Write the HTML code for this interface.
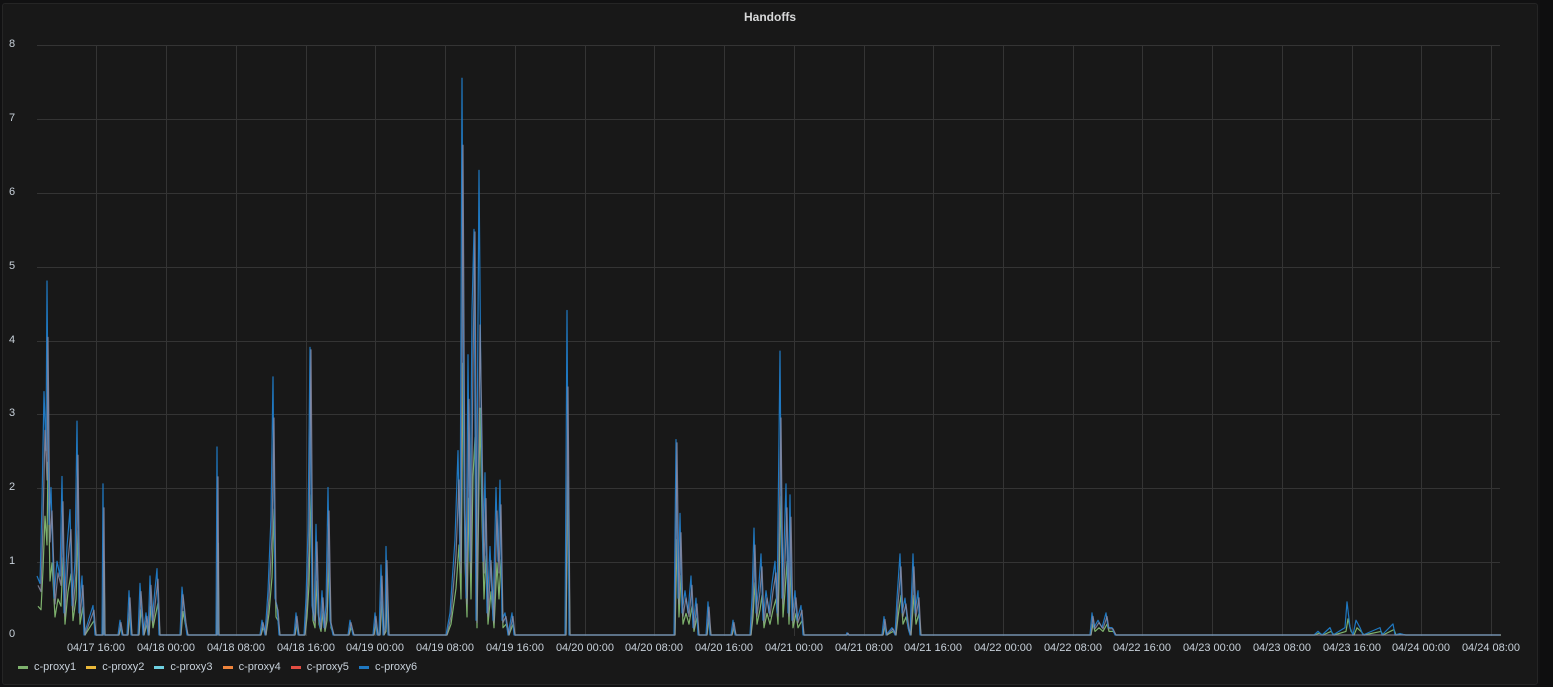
<!DOCTYPE html>
<html><head><meta charset="utf-8"><style>
html,body{margin:0;padding:0;background:#111112;width:1553px;height:687px;overflow:hidden;font-family:"Liberation Sans",sans-serif;}
.panel{position:absolute;left:2px;top:3px;width:1534px;height:680px;background:#181818;border:1px solid #252525;border-radius:3px;}
.strip{position:absolute;left:1540px;top:0;width:13px;height:687px;background:#0e0e0f;}
.title{position:absolute;left:0;width:1540px;top:10px;text-align:center;color:#d8d9da;font-size:12px;font-weight:bold;}
.yl{position:absolute;left:9px;color:#c7d0d9;font-size:11px;}
.xl{position:absolute;top:642px;color:#c7d0d9;font-size:11px;width:80px;margin-left:-40px;text-align:center;}
.leg{position:absolute;top:661px;left:18px;color:#c7d0d9;font-size:11px;display:flex;gap:0;}
.leg span{display:inline-flex;align-items:center;margin-right:10px;}
.leg i{display:inline-block;width:10px;height:3px;margin-right:6px;}
</style></head><body>
<div class="panel"></div><div class="strip"></div>
<div class="title">Handoffs</div>
<svg width="1553" height="687" style="position:absolute;left:0;top:0">
<g stroke="#343434" stroke-width="1">
<line x1="37" y1="45.5" x2="1500" y2="45.5"/><line x1="37" y1="119.5" x2="1500" y2="119.5"/>
<line x1="37" y1="193.5" x2="1500" y2="193.5"/><line x1="37" y1="267.5" x2="1500" y2="267.5"/>
<line x1="37" y1="341.5" x2="1500" y2="341.5"/><line x1="37" y1="414.5" x2="1500" y2="414.5"/>
<line x1="37" y1="488.5" x2="1500" y2="488.5"/><line x1="37" y1="562.5" x2="1500" y2="562.5"/>
<line x1="96.5" y1="45" x2="96.5" y2="636"/><line x1="166.5" y1="45" x2="166.5" y2="636"/><line x1="236.5" y1="45" x2="236.5" y2="636"/><line x1="306.5" y1="45" x2="306.5" y2="636"/><line x1="375.5" y1="45" x2="375.5" y2="636"/><line x1="445.5" y1="45" x2="445.5" y2="636"/><line x1="515.5" y1="45" x2="515.5" y2="636"/><line x1="585.5" y1="45" x2="585.5" y2="636"/><line x1="654.5" y1="45" x2="654.5" y2="636"/><line x1="724.5" y1="45" x2="724.5" y2="636"/><line x1="794.5" y1="45" x2="794.5" y2="636"/><line x1="864.5" y1="45" x2="864.5" y2="636"/><line x1="933.5" y1="45" x2="933.5" y2="636"/><line x1="1003.5" y1="45" x2="1003.5" y2="636"/><line x1="1073.5" y1="45" x2="1073.5" y2="636"/><line x1="1142.5" y1="45" x2="1142.5" y2="636"/><line x1="1212.5" y1="45" x2="1212.5" y2="636"/><line x1="1282.5" y1="45" x2="1282.5" y2="636"/><line x1="1352.5" y1="45" x2="1352.5" y2="636"/><line x1="1421.5" y1="45" x2="1421.5" y2="636"/><line x1="1491.5" y1="45" x2="1491.5" y2="636"/>
</g>
<g fill="none" stroke-width="1.2" stroke-linejoin="round">
<g transform="translate(1,635) scale(1,-36)"><path vector-effect="non-scaling-stroke" stroke="#7eb26d" d="M37,0.8 L40,0.7 L42,1.8 L44,3.3 L46,2.5 L47,4.8 L49,1.5 L51,2.0 L54,0.5 L57,1.0 L60,0.8 L62,2.15 L64,0.3 L67,1.2 L70,1.7 L72,0.4 L75,1.0 L77,2.9 L79,0.3 L82,0.8 L84,0 L93,0.4 L95,0 L102,0 L103,2.05 L104,0 L118,0 L120,0.2 L122,0 L127,0 L129,0.6 L131,0 L138,0 L140,0.7 L143,0 L146,0.3 L148,0 L150,0.8 L152,0.2 L157,0.9 L159,0 L180,0 L182,0.65 L185,0.2 L187,0 L216,0 L217,2.55 L218,0 L260,0 L262,0.2 L265,0 L268,0.6 L271,1.6 L273,3.5 L275,0.5 L277,0.4 L279,0 L294,0 L296,0.3 L298,0 L304,0 L306,0.5 L308,1.4 L310,3.9 L312,0.4 L314,0.2 L316,1.5 L318,0.3 L320,0.1 L322,0.6 L324,0.1 L326,0.4 L328,2.0 L330,0.2 L333,0 L348,0 L350,0.2 L353,0 L373,0 L375,0.3 L377,0 L379,0 L381,0.95 L383,0 L385,0.1 L386,1.2 L388,0 L446,0 L450,0.3 L453,0.9 L455,1.3 L458,2.5 L460,1.0 L462,7.55 L464,2.0 L466,0.5 L468,3.8 L470,1.0 L472,4.4 L474,5.5 L476,0.2 L479,6.3 L481,3.2 L483,1.0 L485,2.2 L487,0.3 L490,1.2 L493,0.2 L496,2.0 L498,1.0 L500,2.1 L502,0.2 L505,0.3 L508,0 L512,0.3 L514,0 L565,0 L567,4.4 L569,0 L674,0 L676,2.65 L678,0.5 L680,1.65 L682,0.3 L685,0.6 L688,0.3 L691,0.8 L693,0.1 L696,0.5 L698,0 L706,0 L708,0.45 L710,0 L731,0 L733,0.2 L735,0 L750,0 L752,0.5 L754,1.45 L756,0.3 L759,0.7 L761,1.1 L763,0.2 L766,0.6 L769,0.3 L772,0.7 L775,1.0 L777,0.3 L780,3.85 L782,0.5 L784,1.2 L786,2.05 L788,0.3 L790,1.9 L792,0.2 L795,0.6 L797,0.2 L801,0.4 L803,0 L846,0 L847,0.03 L848,0 L882,0 L884,0.25 L886,0 L892,0.1 L895,0 L897,0.5 L900,1.1 L902,0.3 L905,0.5 L908,0.1 L910,0 L913,1.1 L915,0.3 L918,0.6 L920,0 L1090,0 L1092,0.3 L1094,0.1 L1098,0.2 L1102,0.1 L1106,0.3 L1108,0.1 L1112,0.1 L1115,0 L1314,0 L1318,0.05 L1322,0 L1330,0.1 L1333,0 L1345,0.1 L1347,0.45 L1350,0.1 L1353,0 L1356,0.2 L1360,0.1 L1363,0 L1380,0.1 L1382,0 L1393,0.15 L1395,0 L1400,0.02 L1405,0 L1500,0"/></g>
<g transform="translate(0,635) scale(1,-73.75)"><path vector-effect="non-scaling-stroke" stroke="#1f78c1" d="M37,0.8 L40,0.7 L42,1.8 L44,3.3 L46,2.5 L47,4.8 L49,1.5 L51,2.0 L54,0.5 L57,1.0 L60,0.8 L62,2.15 L64,0.3 L67,1.2 L70,1.7 L72,0.4 L75,1.0 L77,2.9 L79,0.3 L82,0.8 L84,0 L93,0.4 L95,0 L102,0 L103,2.05 L104,0 L118,0 L120,0.2 L122,0 L127,0 L129,0.6 L131,0 L138,0 L140,0.7 L143,0 L146,0.3 L148,0 L150,0.8 L152,0.2 L157,0.9 L159,0 L180,0 L182,0.65 L185,0.2 L187,0 L216,0 L217,2.55 L218,0 L260,0 L262,0.2 L265,0 L268,0.6 L271,1.6 L273,3.5 L275,0.5 L277,0.4 L279,0 L294,0 L296,0.3 L298,0 L304,0 L306,0.5 L308,1.4 L310,3.9 L312,0.4 L314,0.2 L316,1.5 L318,0.3 L320,0.1 L322,0.6 L324,0.1 L326,0.4 L328,2.0 L330,0.2 L333,0 L348,0 L350,0.2 L353,0 L373,0 L375,0.3 L377,0 L379,0 L381,0.95 L383,0 L385,0.1 L386,1.2 L388,0 L446,0 L450,0.3 L453,0.9 L455,1.3 L458,2.5 L460,1.0 L462,7.55 L464,2.0 L466,0.5 L468,3.8 L470,1.0 L472,4.4 L474,5.5 L476,0.2 L479,6.3 L481,3.2 L483,1.0 L485,2.2 L487,0.3 L490,1.2 L493,0.2 L496,2.0 L498,1.0 L500,2.1 L502,0.2 L505,0.3 L508,0 L512,0.3 L514,0 L565,0 L567,4.4 L569,0 L674,0 L676,2.65 L678,0.5 L680,1.65 L682,0.3 L685,0.6 L688,0.3 L691,0.8 L693,0.1 L696,0.5 L698,0 L706,0 L708,0.45 L710,0 L731,0 L733,0.2 L735,0 L750,0 L752,0.5 L754,1.45 L756,0.3 L759,0.7 L761,1.1 L763,0.2 L766,0.6 L769,0.3 L772,0.7 L775,1.0 L777,0.3 L780,3.85 L782,0.5 L784,1.2 L786,2.05 L788,0.3 L790,1.9 L792,0.2 L795,0.6 L797,0.2 L801,0.4 L803,0 L846,0 L847,0.03 L848,0 L882,0 L884,0.25 L886,0 L892,0.1 L895,0 L897,0.5 L900,1.1 L902,0.3 L905,0.5 L908,0.1 L910,0 L913,1.1 L915,0.3 L918,0.6 L920,0 L1090,0 L1092,0.3 L1094,0.1 L1098,0.2 L1102,0.1 L1106,0.3 L1108,0.1 L1112,0.1 L1115,0 L1314,0 L1318,0.05 L1322,0 L1330,0.1 L1333,0 L1345,0.1 L1347,0.45 L1350,0.1 L1353,0 L1356,0.2 L1360,0.1 L1363,0 L1380,0.1 L1382,0 L1393,0.15 L1395,0 L1400,0.02 L1405,0 L1500,0"/></g>
<g transform="translate(1,635) scale(1,-62)" opacity="0.8"><path vector-effect="non-scaling-stroke" stroke="#8f8fa8" d="M37,0.8 L40,0.7 L42,1.8 L44,3.3 L46,2.5 L47,4.8 L49,1.5 L51,2.0 L54,0.5 L57,1.0 L60,0.8 L62,2.15 L64,0.3 L67,1.2 L70,1.7 L72,0.4 L75,1.0 L77,2.9 L79,0.3 L82,0.8 L84,0 L93,0.4 L95,0 L102,0 L103,2.05 L104,0 L118,0 L120,0.2 L122,0 L127,0 L129,0.6 L131,0 L138,0 L140,0.7 L143,0 L146,0.3 L148,0 L150,0.8 L152,0.2 L157,0.9 L159,0 L180,0 L182,0.65 L185,0.2 L187,0 L216,0 L217,2.55 L218,0 L260,0 L262,0.2 L265,0 L268,0.6 L271,1.6 L273,3.5 L275,0.5 L277,0.4 L279,0 L294,0 L296,0.3 L298,0 L304,0 L306,0.5 L308,1.4 L310,4.6 L312,0.4 L314,0.2 L316,1.5 L318,0.3 L320,0.1 L322,0.6 L324,0.1 L326,0.4 L328,2.0 L330,0.2 L333,0 L348,0 L350,0.2 L353,0 L373,0 L375,0.3 L377,0 L379,0 L381,0.95 L383,0 L385,0.1 L386,1.2 L388,0 L446,0 L450,0.3 L453,0.9 L455,1.3 L458,2.5 L460,1.0 L462,7.9 L464,2.0 L466,0.5 L468,3.8 L470,1.0 L472,4.4 L474,6.5 L476,0.2 L479,5.0 L481,3.2 L483,1.0 L485,2.2 L487,0.3 L490,1.2 L493,0.2 L496,2.0 L498,1.0 L500,2.1 L502,0.2 L505,0.3 L508,0 L512,0.3 L514,0 L565,0 L567,4.0 L569,0 L674,0 L676,3.1 L678,0.5 L680,1.65 L682,0.3 L685,0.6 L688,0.3 L691,0.8 L693,0.1 L696,0.5 L698,0 L706,0 L708,0.45 L710,0 L731,0 L733,0.2 L735,0 L750,0 L752,0.5 L754,1.45 L756,0.3 L759,0.7 L761,1.1 L763,0.2 L766,0.6 L769,0.3 L772,0.7 L775,1.0 L777,0.3 L780,3.5 L782,0.5 L784,1.2 L786,2.05 L788,0.3 L790,1.9 L792,0.2 L795,0.6 L797,0.2 L801,0.4 L803,0 L846,0 L847,0.03 L848,0 L882,0 L884,0.25 L886,0 L892,0.1 L895,0 L897,0.5 L900,1.1 L902,0.3 L905,0.5 L908,0.1 L910,0 L913,1.1 L915,0.3 L918,0.6 L920,0 L1090,0 L1092,0.3 L1094,0.1 L1098,0.2 L1102,0.1 L1106,0.3 L1108,0.1 L1112,0.1 L1115,0 L1500,0"/></g>
</g>
</svg>
<div class="yl" style="top:38px">8</div><div class="yl" style="top:112px">7</div><div class="yl" style="top:186px">6</div><div class="yl" style="top:260px">5</div><div class="yl" style="top:334px">4</div><div class="yl" style="top:407px">3</div><div class="yl" style="top:481px">2</div><div class="yl" style="top:555px">1</div><div class="yl" style="top:628px">0</div>
<div class="xl" style="left:96px">04/17 16:00</div><div class="xl" style="left:166px">04/18 00:00</div><div class="xl" style="left:236px">04/18 08:00</div><div class="xl" style="left:306px">04/18 16:00</div><div class="xl" style="left:375px">04/19 00:00</div><div class="xl" style="left:445px">04/19 08:00</div><div class="xl" style="left:515px">04/19 16:00</div><div class="xl" style="left:585px">04/20 00:00</div><div class="xl" style="left:654px">04/20 08:00</div><div class="xl" style="left:724px">04/20 16:00</div><div class="xl" style="left:794px">04/21 00:00</div><div class="xl" style="left:864px">04/21 08:00</div><div class="xl" style="left:933px">04/21 16:00</div><div class="xl" style="left:1003px">04/22 00:00</div><div class="xl" style="left:1073px">04/22 08:00</div><div class="xl" style="left:1142px">04/22 16:00</div><div class="xl" style="left:1212px">04/23 00:00</div><div class="xl" style="left:1282px">04/23 08:00</div><div class="xl" style="left:1352px">04/23 16:00</div><div class="xl" style="left:1421px">04/24 00:00</div><div class="xl" style="left:1491px">04/24 08:00</div>
<div class="leg"><span><i style="background:#7eb26d"></i>c-proxy1</span><span><i style="background:#eab839"></i>c-proxy2</span><span><i style="background:#6ed0e0"></i>c-proxy3</span><span><i style="background:#ef843c"></i>c-proxy4</span><span><i style="background:#e24d42"></i>c-proxy5</span><span><i style="background:#1f78c1"></i>c-proxy6</span></div>
</body></html>
